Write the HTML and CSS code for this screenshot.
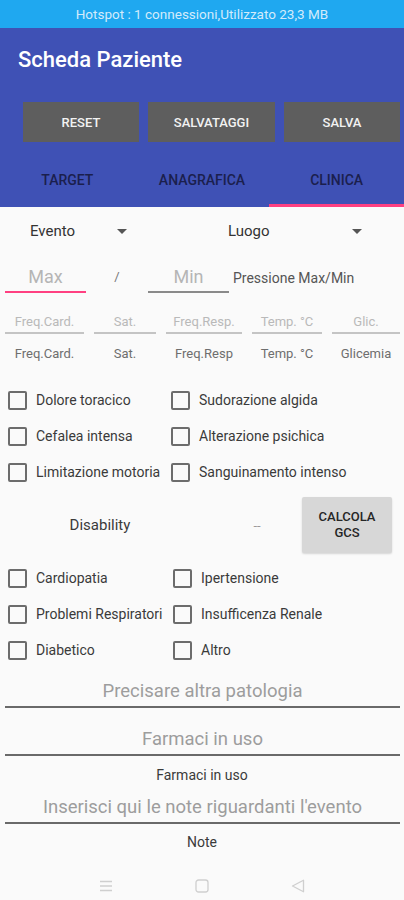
FILE: index.html
```html
<!DOCTYPE html>
<html lang="it">
<head>
<meta charset="utf-8">
<title>Scheda Paziente</title>
<link rel="stylesheet" href="styles.css">
</head>
<body>
<div class="status">Hotspot : 1 connessioni,Utilizzato 23,3 MB</div>
<header class="appbar">
  <div class="title">Scheda Paziente</div>
  <div class="actions">
    <button class="abtn">RESET</button>
    <button class="abtn">SALVATAGGI</button>
    <button class="abtn">SALVA</button>
  </div>
  <nav class="tabs">
    <div class="tab">TARGET</div>
    <div class="tab">ANAGRAFICA</div>
    <div class="tab active">CLINICA</div>
  </nav>
</header>
<main class="content">
  <div class="spinners">
    <div class="spin spin1"><span>Evento</span><span class="arrow"></span></div>
    <div class="spin spin2"><span>Luogo</span><span class="arrow"></span></div>
  </div>
  <div class="pressure">
    <div class="pfield focused">Max</div>
    <div class="slash">/</div>
    <div class="pfield">Min</div>
    <div class="plabel">Pressione Max/Min</div>
  </div>
  <div class="vitals">
    <div class="vfield">Freq.Card.</div>
    <div class="vfield">Sat.</div>
    <div class="vfield">Freq.Resp.</div>
    <div class="vfield">Temp. °C</div>
    <div class="vfield">Glic.</div>
  </div>
  <div class="vitals vlabels">
    <div>Freq.Card.</div>
    <div>Sat.</div>
    <div>Freq.Resp</div>
    <div>Temp. °C</div>
    <div>Glicemia</div>
  </div>
  <div class="checks">
    <label class="check"><span class="box"></span>Dolore toracico</label>
    <label class="check"><span class="box"></span>Sudorazione algida</label>
    <label class="check"><span class="box"></span>Cefalea intensa</label>
    <label class="check"><span class="box"></span>Alterazione psichica</label>
    <label class="check"><span class="box"></span>Limitazione motoria</label>
    <label class="check"><span class="box"></span>Sanguinamento intenso</label>
  </div>
  <div class="disability">
    <div class="dlabel">Disability</div>
    <div class="dvalue">--</div>
    <button class="gcs">CALCOLA<br>GCS</button>
  </div>
  <div class="checks checks2">
    <label class="check"><span class="box"></span>Cardiopatia</label>
    <label class="check"><span class="box"></span>Ipertensione</label>
    <label class="check"><span class="box"></span>Problemi Respiratori</label>
    <label class="check"><span class="box"></span>Insufficenza Renale</label>
    <label class="check"><span class="box"></span>Diabetico</label>
    <label class="check"><span class="box"></span>Altro</label>
  </div>
  <div class="wide first">Precisare altra patologia</div>
  <div class="wide second">Farmaci in uso</div>
  <div class="caption">Farmaci in uso</div>
  <div class="wide third">Inserisci qui le note riguardanti l'evento</div>
  <div class="caption note">Note</div>
</main>
<footer class="navbar">
  <svg class="nicon" width="14" height="14" viewBox="0 0 14 14"><path d="M1 2.5h12M1 7h12M1 11.5h12" stroke="#cfcfcf" stroke-width="1.3" fill="none"/></svg>
  <svg class="nicon" width="14" height="14" viewBox="0 0 14 14"><rect x="1" y="1" width="12" height="12" rx="2.5" stroke="#cfcfcf" stroke-width="1.3" fill="none"/></svg>
  <svg class="nicon" width="14" height="14" viewBox="0 0 14 14"><path d="M12.5 1.2v11.6L1.5 7z" stroke="#cfcfcf" stroke-width="1.3" stroke-linejoin="round" fill="none"/></svg>
</footer>
</body>
</html>
```

FILE: styles.css
```css
* { box-sizing: border-box; }
html, body { margin: 0; padding: 0; }
body {
  width: 404px;
  height: 900px;
  background: #fafafa;
  font-family: Roboto, "Noto Sans", Arial, sans-serif;
  color: #333;
  overflow: hidden;
}
.status {
  height: 28px;
  line-height: 28px;
  background: #1fa8f0;
  color: #d3ebfb;
  font-size: 13.5px;
  text-align: center;
}
.appbar {
  background: #3f51b5;
}
.title {
  height: 64px;
  line-height: 64px;
  padding-left: 18px;
  color: #fff;
  font-size: 22px;
  font-weight: 500;
}
.actions {
  margin-top: 10px;
  display: grid;
  grid-template-columns: 116px 127px 116px;
  column-gap: 9px;
  padding-left: 23px;
}
.abtn {
  height: 40px;
  border: 0;
  background: #5e5e5e;
  color: #f2f2f2;
  font-family: inherit;
  font-size: 13px;
  font-weight: 500;
  padding: 0;
}
.tabs {
  display: grid;
  grid-template-columns: 1fr 1fr 1fr;
  padding-top: 14px;
}
.tab {
  height: 51px;
  line-height: 48px;
  text-align: center;
  font-size: 14px;
  font-weight: 500;
  color: #1b1f4d;
  border-bottom: 3px solid transparent;
}
.tab.active { border-bottom-color: #ff4081; }

.spinners {
  height: 48px;
  display: flex;
  align-items: center;
}
.spin {
  display: flex;
  align-items: center;
  justify-content: space-between;
  font-size: 15px;
  color: #333;
}
.spin1 { margin-left: 30px; width: 97px; }
.spin2 { margin-left: 101px; width: 134px; }
.arrow {
  width: 0;
  height: 0;
  border-left: 5px solid transparent;
  border-right: 5px solid transparent;
  border-top: 5px solid #555;
}
.pressure {
  margin-top: 8px;
  display: flex;
  align-items: flex-start;
  padding-left: 5px;
}
.pfield {
  width: 81px;
  height: 30px;
  line-height: 28px;
  text-align: center;
  font-size: 18px;
  color: #b5b5b5;
  border-bottom: 2px solid #8a8a8a;
}
.pfield.focused { border-bottom-color: #ff4081; }
.slash {
  width: 62px;
  line-height: 28px;
  text-align: center;
  color: #777;
  font-size: 13px;
}
.plabel {
  margin-left: 4px;
  line-height: 30px;
  font-size: 14px;
  color: #555;
}
.vitals {
  margin-top: 19px;
  display: grid;
  grid-template-columns: 79px 62px 76px 70px 68px;
  column-gap: 10px;
  padding-left: 5px;
  font-size: 13px;
  text-align: center;
}
.vfield {
  height: 22px;
  line-height: 20px;
  color: #b9b9b9;
  border-bottom: 2px solid #c4c4c4;
}
.vlabels {
  margin-top: 10px;
  line-height: 20px;
  color: #6e6e6e;
}
.checks {
  margin-top: 18px;
  display: grid;
  grid-template-columns: 163px 1fr;
  padding-left: 8px;
}
.checks2 {
  margin-top: 0;
  grid-template-columns: 165px 1fr;
}
.check {
  height: 36px;
  display: flex;
  align-items: center;
  font-size: 14px;
  color: #3a3a3a;
  white-space: nowrap;
}
.box {
  width: 19px;
  height: 19px;
  border: 2px solid #6c6c6c;
  border-radius: 2px;
  margin-right: 9px;
  flex: none;
}
.disability {
  height: 70px;
  display: grid;
  grid-template-columns: 200px 1fr 90px;
  align-items: center;
  padding-right: 12px;
}
.dlabel {
  text-align: center;
  font-size: 15px;
  color: #3a3a3a;
}
.dvalue {
  text-align: center;
  padding-left: 12px;
  color: #9a9a9a;
  font-size: 13px;
}
.gcs {
  height: 56px;
  border: 0;
  border-radius: 2px;
  background: #d7d7d7;
  box-shadow: 0 1px 2px rgba(0,0,0,0.15);
  color: #262626;
  font-family: inherit;
  font-size: 13px;
  font-weight: 500;
  line-height: 16px;
  padding: 0;
}
.wide {
  margin: 0 4px 0 5px;
  height: 32px;
  line-height: 30px;
  text-align: center;
  font-size: 18.5px;
  color: #9d9d9d;
  border-bottom: 2px solid #6a6a6a;
}
.wide.first { margin-top: 8px; }
.wide.second { margin-top: 16px; }
.wide.third { margin-top: 7px; }
.caption {
  margin-top: 9px;
  line-height: 20px;
  text-align: center;
  font-size: 14px;
  color: #3a3a3a;
}
.caption.note { margin-top: 8px; }
.navbar {
  margin-top: 10px;
  height: 48px;
  display: flex;
  align-items: center;
  justify-content: center;
  gap: 82px;
}
.nicon { display: block; }
```
